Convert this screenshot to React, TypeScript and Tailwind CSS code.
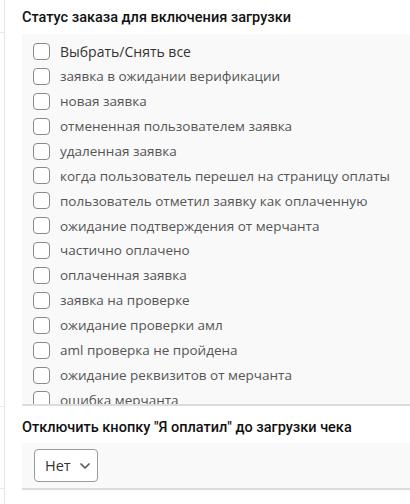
import { ChevronDown } from "lucide-react";

const statuses = [
  "заявка в ожидании верификации",
  "новая заявка",
  "отмененная пользователем заявка",
  "удаленная заявка",
  "когда пользователь перешел на страницу оплаты",
  "пользователь отметил заявку как оплаченную",
  "ожидание подтверждения от мерчанта",
  "частично оплачено",
  "оплаченная заявка",
  "заявка на проверке",
  "ожидание проверки амл",
  "aml проверка не пройдена",
  "ожидание реквизитов от мерчанта",
  "ошибка мерчанта",
];

function Box() {
  return <span className="h-[17px] w-[17px] shrink-0 rounded-[4px] border border-[#8a8a8a] bg-white" />;
}

export default function App() {
  return (
    <div className="flex h-[504px] w-[410px] overflow-hidden bg-white">
      <div className="relative w-[5px] shrink-0 border-r border-[#e4e4e4]">
        <div className="absolute left-0 top-[32px] h-px w-full bg-[#e8e8e8]" />
        <div className="absolute left-0 top-[406px] h-px w-full bg-[#e8e8e8]" />
        <div className="absolute left-0 top-[488px] h-px w-full bg-[#e8e8e8]" />
      </div>
      <div className="flex-1 pl-[17px] pt-[9px] font-['Open_Sans',sans-serif]">
        <h3 className="font-['Roboto',sans-serif] text-[14.5px] font-medium leading-[18px] text-[#111]">
          Статус заказа для включения загрузки
        </h3>
        <div className="mt-[7px] h-[372px] overflow-hidden border-b-2 border-[#dcdcdc] bg-[#f9f9f9] pl-[11px] pt-[5px]">
          <label className="flex h-[24.9px] items-center gap-[10px] text-[14px] text-[#333]">
            <Box />
            <span>Выбрать/Снять все</span>
          </label>
          {statuses.map((s) => (
            <label key={s} className="flex h-[24.9px] items-center gap-[10px] whitespace-nowrap text-[13.5px] text-[#555]">
              <Box />
              <span>{s}</span>
            </label>
          ))}
        </div>
        <h3 className="mt-[13px] font-['Roboto',sans-serif] text-[14.5px] font-medium leading-[18px] text-[#111]">
          Отключить кнопку "Я оплатил" до загрузки чека
        </h3>
        <div className="mt-[6px] h-[47px] border-b-2 border-[#dcdcdc] bg-[#f9f9f9] pl-[12px] pt-[6px]">
          <div className="flex h-[33px] w-[64px] items-center gap-[6px] rounded-[4px] border border-[#9a9a9a] bg-white pl-[10px] text-[14.5px] text-[#333]">
            <span>Нет</span>
            <ChevronDown size={16} strokeWidth={2.5} className="text-[#555]" />
          </div>
        </div>
      </div>
    </div>
  );
}
